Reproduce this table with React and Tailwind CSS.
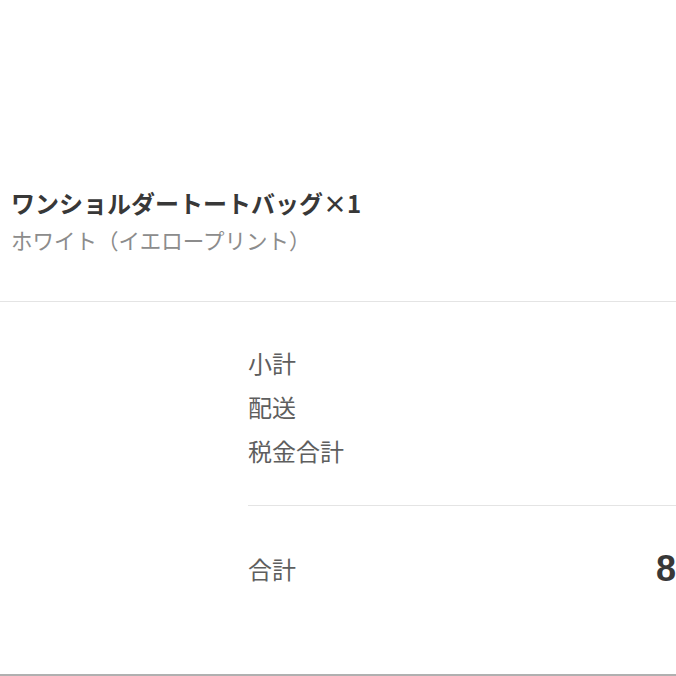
import React from 'react'

const rows = ['小計', '配送', '税金合計']

export default function App() {
  return (
    <div
      className="w-[676px] h-[676px] overflow-hidden bg-white flex flex-col"
      style={{ fontFamily: '"Noto Sans CJK JP", "Noto Sans", sans-serif' }}
    >
      {/* Line item */}
      <div className="pt-[188px] pl-[11px] pb-[47px] border-b border-[#e4e4e4]">
        <p className="text-[24px] leading-[30px] font-bold text-[#383838] whitespace-nowrap">
          ワンショルダートートバッグ×1
        </p>
        <p className="mt-[7px] text-[21.5px] leading-[29px] text-[#8c8c8c] whitespace-nowrap">
          ホワイト（イエロープリント）
        </p>
      </div>

      {/* Summary */}
      <div className="flex-1 pl-[248px] border-b-2 border-[#b0b0b0]">
        <div className="pt-[39px] pb-[32px] border-b border-[#e4e4e4]">
          {rows.map(label => (
            <p key={label} className="text-[24px] leading-[44px] text-[#5e5e5e]">
              {label}
            </p>
          ))}
        </div>
        <div className="flex items-center pt-[41px]">
          <span className="w-[408px] shrink-0 text-[24px] leading-[44px] text-[#5e5e5e]">合計</span>
          <span
            className="text-[36px] leading-[44px] font-bold text-[#383838] whitespace-nowrap"
            style={{ fontFamily: '"Liberation Sans", Arial, sans-serif' }}
          >
            8,800円
          </span>
        </div>
      </div>
    </div>
  )
}
